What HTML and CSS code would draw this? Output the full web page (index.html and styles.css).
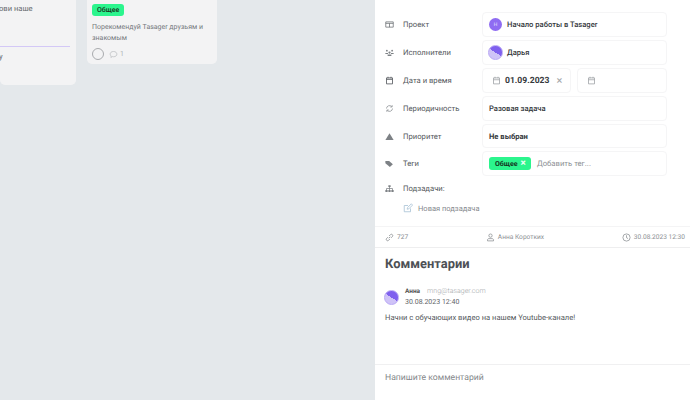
FILE: index.html
```html
<!DOCTYPE html>
<html lang="ru">
<head>
<meta charset="utf-8">
<title>Tasager</title>
<link rel="stylesheet" href="styles.css">
</head>
<body>
<div class="page">
  <main class="board">
    <article class="card card-a">
      <p class="card-a-text">ови наше</p>
      <div class="progress"></div>
      <p class="card-a-text card-a-last">у</p>
    </article>
    <article class="card card-b">
      <span class="chip">Общее</span>
      <p class="card-b-text">Порекомендуй Tasager друзьям и знакомым</p>
      <div class="card-foot">
        <span class="ring"></span>
        <svg class="ico-s" viewBox="0 0 12 12"><path d="M6 2c2.8 0 4.5 1.500 4.500 3.500S8.800 9 6 9c-.6 0-1.100-.1-1.600-.2L2.500 10l.4-2C2 7.300 1.500 6.500 1.500 5.500 1.500 3.500 3.200 2 6 2z" fill="none" stroke="#b9bcbf"/></svg>
        <span class="count">1</span>
      </div>
    </article>
  </main>
  <aside class="panel">
    <section class="fields">
      <div class="row row-a">
        <div class="label"><svg class="ico" viewBox="0 0 12 12"><path d="M1 2.500h10v7H1zM1 4.500h10M6 4.500v5" fill="none" stroke="#6a6e72"/></svg>Проект</div>
        <div class="box"><span class="badge">Н</span><b>Начало работы в Tasager</b></div>
      </div>
      <div class="row row-a">
        <div class="label"><svg class="ico" viewBox="0 0 12 12"><g fill="#7d8185"><circle cx="2.500" cy="3.500" r="1.200"/><circle cx="9.500" cy="3.500" r="1.200"/><circle cx="6" cy="6" r="1.500"/><path d="M.5 6.500h3.500v1.500H.5zM8 6.500h3.500v1.500H8zM3.500 8.500h5V10.500h-5z"/></g></svg>Исполнители</div>
        <div class="box"><span class="avatar"></span><b>Дарья</b></div>
      </div>
      <div class="row row-b">
        <div class="label"><svg class="ico" viewBox="0 0 12 12"><path d="M2 2.500h8v8H2zM2 4.500h8M4 1v2M8 1v2" fill="none" stroke="#55595d" stroke-width="1.100"/></svg>Дата и время</div>
        <div class="dates">
          <div class="box date-from"><svg class="ico-d" viewBox="0 0 12 12"><path d="M2 2.500h8v8H2zM2 5h8M4 1v2M8 1v2" fill="none" stroke="#9a9ea2"/></svg><strong>01.09.2023</strong><span class="close">×</span></div>
          <div class="box date-to"><svg class="ico-d" viewBox="0 0 12 12"><path d="M2 2.500h8v8H2zM2 5h8M4 1v2M8 1v2" fill="none" stroke="#9a9ea2"/></svg></div>
        </div>
      </div>
      <div class="row row-a">
        <div class="label"><svg class="ico" viewBox="0 0 12 12"><path d="M2 6a4 4 0 0 1 7-2.500M10 6a4 4 0 0 1-7 2.500M9.500 1.500v2.500H7M2.500 10.500V8H5" fill="none" stroke="#8a8e92"/></svg>Периодичность</div>
        <div class="box"><b>Разовая задача</b></div>
      </div>
      <div class="row row-c">
        <div class="label"><svg class="ico" viewBox="0 0 12 12"><path d="M6 1.500l5.500 9H.5z" fill="#7d8185"/></svg>Приоритет</div>
        <div class="box"><b class="strong">Не выбран</b></div>
      </div>
      <div class="row row-a">
        <div class="label"><svg class="ico" viewBox="0 0 12 12"><path d="M.5 2.500h5l5 4.500-4 3.500-6-5z" fill="#7d8185"/></svg>Теги</div>
        <div class="box"><span class="chip chip-tag">Общее <i>×</i></span><span class="placeholder">Добавить тег...</span></div>
      </div>
    </section>
    <div class="label sub-label"><svg class="ico" viewBox="0 0 12 12"><path d="M4.500 1.500h3v2.500h-3zM.5 8h3v2.500h-3zM4.500 8h3v2.500h-3zM8.500 8h3v2.500h-3z" fill="#7d8185"/><path d="M2 8V6h8v2M6 4v4" fill="none" stroke="#7d8185"/></svg>Подзадачи:</div>
    <div class="new-sub"><svg class="ico-n" viewBox="0 0 12 12"><path d="M9 6.500V10.500H1.500V3H6M5 7.500l.4-2L10 1l1.500 1.500L7 7z" fill="none" stroke="#a9c3d6"/></svg>Новая подзадача</div>
    <div class="meta">
      <span class="meta-item"><svg class="ico-m" viewBox="0 0 12 12"><path d="M5 7l2-2M4 5.500L2 7.500a1.800 1.800 0 0 0 2.500 2.500l2-2M8 6.500l2-2A1.800 1.800 0 0 0 7.500 2l-2 2" fill="none" stroke="#8a8e92" stroke-width="1.100"/></svg>727</span>
      <span class="meta-item"><svg class="ico-m" viewBox="0 0 12 12"><circle cx="6" cy="3.500" r="2.200" fill="none" stroke="#8a8e92"/><path d="M2 10.500h8V9c0-1-1-1.500-2-1.500H4C3 7.500 2 8 2 9z" fill="none" stroke="#8a8e92"/></svg>Анна Коротких</span>
      <span class="meta-item"><svg class="ico-m" viewBox="0 0 12 12"><circle cx="6" cy="6" r="4.800" fill="none" stroke="#8a8e92"/><path d="M6 3v3.200l2 1.200" fill="none" stroke="#8a8e92"/></svg>30.08.2023 12:30</span>
    </div>
    <section class="comments">
      <h2>Комментарии</h2>
      <div class="comment-head">
        <span class="avatar"></span>
        <div>
          <div class="who"><b>Анна</b><span>mng@tasager.com</span></div>
          <div class="when">30.08.2023 12:40</div>
        </div>
      </div>
      <p class="comment-text">Начни с обучающих видео на нашем Youtube-канале!</p>
    </section>
    <div class="write">Напишите комментарий</div>
  </aside>
</div>
</body>
</html>
```
FILE: styles.css
```css
* { box-sizing: border-box; }
html, body { margin: 0; height: 100%; overflow: hidden; }
body { font-family: Roboto, "Liberation Sans", sans-serif; color: #4a4e52; text-rendering: geometricPrecision; }
.page { display: flex; width: 690px; height: 400px; overflow: hidden; }

.board {
  width: 375px;
  flex: none;
  background: #e4e8eb;
  display: flex;
  align-items: flex-start;
  gap: 11px;
  overflow: hidden;
}
.card { background: #f3f3f4; border-radius: 0 0 5px 5px; flex: none; }
.card-a { width: 76px; height: 85px; padding-top: 4px; }
.card-a-text { margin: 0 0 0 -1px; font-size: 7.600px; line-height: 10px; color: #666a6e; }
.progress { height: 1px; background: #d3c8f6; margin: 32px 6px 0 0; }
.card-a-last { margin-top: 5px; }
.card-b { width: 130px; height: 64px; padding: 4px 5px 0; }
.chip {
  display: flex;
  width: fit-content;
  align-items: center;
  height: 12px;
  padding: 0 5px;
  border-radius: 3px;
  background: #2bf58d;
  color: #18331f;
  font-size: 7px;
  font-weight: 500;
}
.card-b-text { margin: 6px 0 0; font-size: 7px; line-height: 11px; color: #75797d; }
.card-foot { display: flex; align-items: center; margin-top: 4px; }
.ring { width: 12px; height: 12px; border: 1px solid #a9abae; border-radius: 50%; }
.ico-s { width: 9px; height: 9px; margin-left: 5px; }
.count { font-size: 7px; color: #b0b3b6; margin-left: 2px; }

.panel { width: 315px; flex: none; background: #fff; display: flex; flex-direction: column; height: 400px; }
.fields { padding: 12px 23px 0 10px; display: flex; flex-direction: column; gap: 3px; }
.row { display: flex; align-items: stretch; }
.row-a { height: 25px; }
.row-b { height: 25px; }
.row-c { height: 24px; }
.label { width: 97px; flex: none; display: flex; align-items: center; font-size: 7.700px; color: #55595d; }
.ico { width: 9px; height: 9px; margin-right: 9px; flex: none; }
.box {
  flex: 1;
  border: 1px solid #f5f5f6;
  border-radius: 4px;
  display: flex;
  align-items: center;
  padding: 0 6px;
  font-size: 7.600px;
  color: #34383c;
}
.box b { font-weight: 500; }
.box b.strong { font-weight: 700; }
.badge {
  width: 13px; height: 13px; border-radius: 50%; background: #8f6cf2; color: #e9e3fc;
  font-size: 5px; display: flex; align-items: center; justify-content: center; margin-right: 5px;
}
.avatar {
  width: 15px; height: 15px; border-radius: 50%; flex: none; margin-right: 4px;
  border: 1px solid #b9a8f5;
  background: linear-gradient(33deg, #cfc3f7 50%, #7f60ee 50%);
}
.box .avatar { margin-left: -1px; }
.dates { flex: 1; display: flex; gap: 6px; }
.date-from { flex: none; width: 89px; }
.date-to { flex: 1; padding-left: 9px; }
.ico-d { width: 9px; height: 9px; margin-left: 3px; margin-right: 4px; flex: none; }
.date-to .ico-d { margin-left: 0; }
.date-from strong { font-size: 8.600px; font-weight: 700; }
.close { color: #a5a8ab; font-size: 11px; margin-left: 7px; }
.chip-tag { height: 13px; padding: 0 5px 0 6px; font-size: 7px; font-weight: 700; color: #15361f; }
.chip-tag i { font-style: normal; color: #e9fff3; font-size: 10px; margin-left: 3px; }
.placeholder { color: #8e9194; font-size: 7.700px; margin-left: 6px; }

.sub-label { width: auto; margin: 7px 0 0 10px; height: 11px; }
.new-sub { display: flex; align-items: center; margin: 8px 0 0 28px; height: 12px; font-size: 7.500px; color: #85898d; }
.ico-n { width: 10px; height: 10px; margin-right: 5px; }
.meta {
  margin-top: 12px;
  height: 22px;
  border-top: 1px solid #f4f4f5;
  border-bottom: 1px solid #eeeeef;
  display: flex;
  align-items: center;
  justify-content: space-between;
  padding: 0 5px 0 10px;
  font-size: 6.600px;
  color: #8c9094;
}
.meta-item { display: flex; align-items: center; }
.ico-m { width: 9px; height: 9px; margin-right: 3px; }
.comments { padding: 8px 10px 0; flex: 1; }
h2 { margin: 0; font-size: 12.900px; line-height: 18px; font-weight: 700; color: #4d5054; }
.comment-head { display: flex; align-items: center; margin-top: 13px; margin-left: -1px; }
.comment-head .avatar { margin-right: 6px; }
.who { font-size: 6.500px; line-height: 9px; color: #a4a7aa; }
.who b { color: #555; font-weight: 700; margin-right: 7px; }
.who span { font-size: 7px; font-weight: 300; }
.when { font-size: 7px; line-height: 10px; color: #5e6266; margin-top: 1px; }
.comment-text { margin: 5px 0 0; font-size: 7.600px; line-height: 11px; color: #55595d; }
.write {
  height: 36px;
  border-top: 1px solid #f0f0f1;
  padding: 8px 10px 0;
  font-size: 8.650px;
  line-height: 11px;
  color: #85888b;
}
```
